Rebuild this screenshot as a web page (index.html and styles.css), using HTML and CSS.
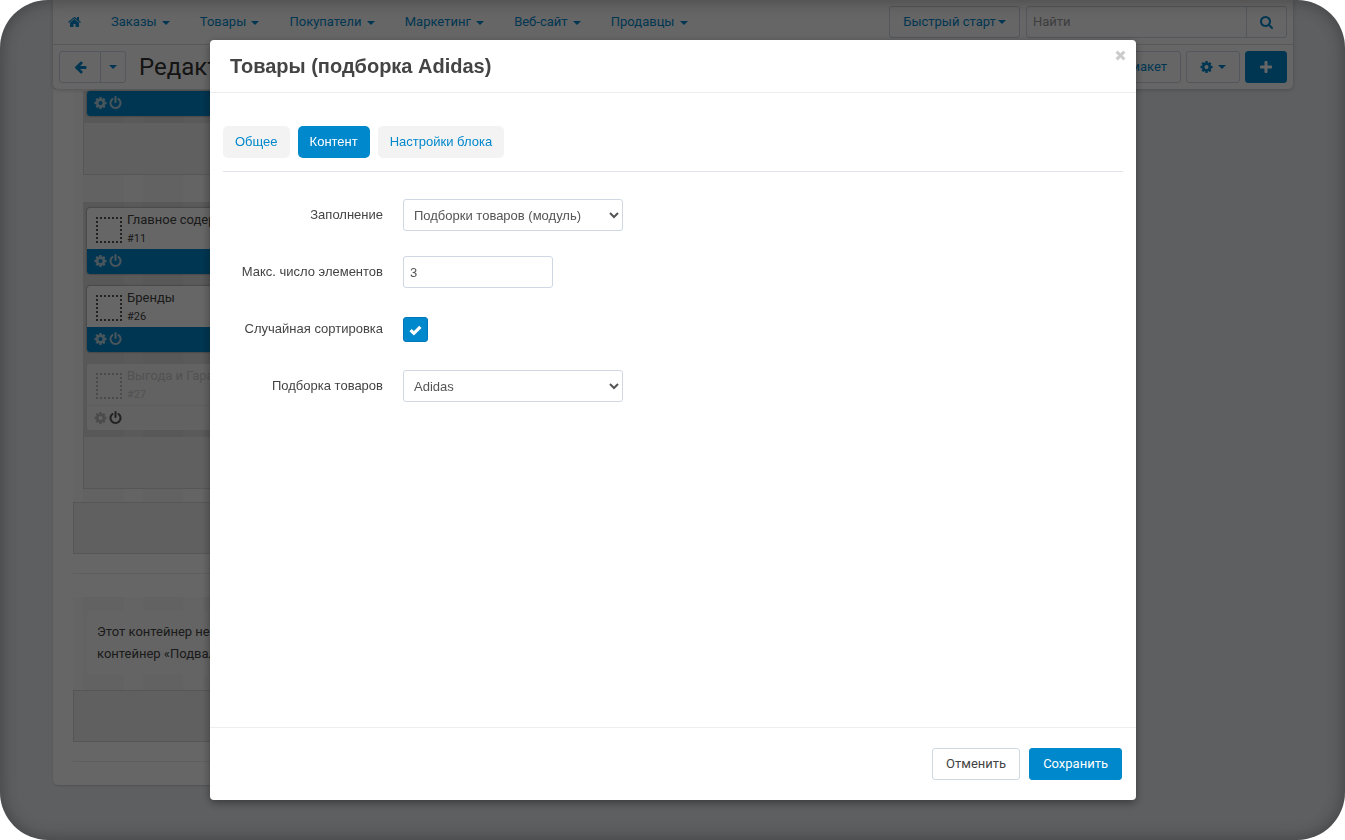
FILE: index.html
```html
<!DOCTYPE html>
<html lang="ru">
<head>
    <meta charset="UTF-8">
    <meta name="viewport" content="width=device-width, initial-scale=1.0">
    <title>Редактирование макета</title>
    <link rel="stylesheet" href="styles.css">
</head>
<body>

    <!-- Shared icons -->
    <svg class="sprite" aria-hidden="true">
        <symbol id="i-home" viewBox="0 0 1664 1792"><path d="M1408 992v480q0 26-19 45t-45 19H960v-384H704v384H320q-26 0-45-19t-19-45V992q0-1 .5-3t.5-3l575-474 575 474q1 2 1 6zm223-69l-62 74q-8 9-21 11h-3q-13 0-21-7L832 424l-692 577q-12 8-24 7-13-2-21-11l-62-74q-8-10-7-23.500t11-21.500l719-599q32-26 76-26t76 26l244 204V288q0-14 9-23t23-9h192q14 0 23 9t9 23v408l219 182q10 8 11 21.500t-7 23.500z"/></symbol>
        <symbol id="i-gear" viewBox="0 0 1536 1792"><path d="M1024 896q0-106-75-181t-181-75-181 75-75 181 75 181 181 75 181-75 75-181zm512-109v222q0 12-8 23t-20 13l-185 28q-19 54-39 91 35 50 107 138 10 12 10 25t-9 23q-27 37-99 108t-94 71q-12 0-26-9l-138-108q-44 23-91 38-16 136-29 186-7 28-36 28H657q-14 0-24.500-8.500T621 1634l-28-184q-49-16-90-37l-141 107q-10 9-25 9-14 0-25-11-126-114-165-168-7-10-7-23 0-12 8-23 15-21 51-66.500t54-70.500q-27-50-41-99L29 1040q-13-2-21-12.500T0 1004V782q0-12 8-23t19-13l186-28q14-46 39-92-40-57-107-138-10-12-10-24 0-10 9-23 26-36 98.500-107.500T337 262q13 0 26 10l138 107q44-23 91-38 16-136 29-186 7-28 36-28h222q14 0 24.500 8.500T915 157l28 184q49 16 90 37l142-107q9-9 24-9 13 0 25 10 129 119 165 170 7 8 7 22 0 12-8 23-15 21-51 66.500t-54 70.500q26 50 41 98l183 28q13 2 21 12.500t8 23.500z"/></symbol>
        <symbol id="i-power" viewBox="0 0 1536 1792"><path d="M1536 896q0 156-61 298t-164 245-245 164-298 61-298-61-245-164-164-245T0 896q0-182 80.500-343T307 283q43-32 95.500-25t83.500 50q32 42 24.500 94.500T461 487q-98 74-151.500 181T256 896q0 104 40.500 198.500T406 1258t163.500 109.500T768 1408t198.500-40.500T1130 1258t109.500-163.500T1280 896q0-121-53.500-228T1075 487q-42-32-49.500-84.500T1050 308q31-43 84-50t95 25q146 109 226.500 270t80.500 343zM896 128v640q0 52-38 90t-90 38-90-38-38-90V128q0-52 38-90t90-38 90 38 38 90z"/></symbol>
        <symbol id="i-search" viewBox="0 0 1664 1792"><path d="M1152 832q0-185-131.500-316.500T704 384 387.500 515.500 256 832t131.500 316.500T704 1280t316.500-131.500T1152 832zm512 832q0 52-38 90t-90 38q-54 0-90-38l-343-342q-179 124-399 124-143 0-273.500-55.500t-225-150-150-225T0 832t55.500-273.500 150-225 225-150T704 128t273.500 55.500 225 150 150 225T1408 832q0 220-124 399l343 343q37 37 37 90z"/></symbol>
        <symbol id="i-back" viewBox="0 0 1536 1792"><path d="M1536 896v128q0 53-32.500 90.500T1419 1152H715l293 294q38 36 38 90t-38 90l-75 76q-37 37-90 37-52 0-91-37L101 1050q-37-37-37-90 0-52 37-91l651-650q38-38 91-38 52 0 90 38l75 74q38 38 38 91t-38 91L715 768h704q52 0 84.500 37.500T1536 896z"/></symbol>
        <symbol id="i-plus" viewBox="0 0 12 12"><path d="M4.500 1Q4.500 0 5.500 0h1Q7.500 0 7.500 1v3.500H11q1 0 1 1v1q0 1-1 1H7.500V11q0 1-1 1h-1q-1 0-1-1V7.500H1q-1 0-1-1v-1q0-1 1-1h3.500z"/></symbol>
        <symbol id="i-close" viewBox="0 0 12 12"><path d="M3 3l6 6m0-6l-6 6" fill="none" stroke="currentColor" stroke-width="3.400" stroke-linecap="square"/></symbol>
    </svg>

    <div class="page">
        <header class="header">
            <nav class="navbar">
                <a href="#" class="home" aria-label="Главная"><svg class="icon"><use href="#i-home"/></svg></a>
                <a href="#">Заказы <i class="caret"></i></a>
                <a href="#">Товары <i class="caret"></i></a>
                <a href="#">Покупатели <i class="caret"></i></a>
                <a href="#">Маркетинг <i class="caret"></i></a>
                <a href="#">Веб-сайт <i class="caret"></i></a>
                <a href="#">Продавцы <i class="caret"></i></a>
                <button class="btn quick-start">Быстрый старт <i class="caret"></i></button>
                <form class="search">
                    <input type="text" placeholder="Найти" aria-label="Найти">
                    <button type="button" aria-label="Поиск"><svg class="icon"><use href="#i-search"/></svg></button>
                </form>
            </nav>
            <div class="actions">
                <div class="btn-group">
                    <button class="btn back" aria-label="Назад"><svg class="icon"><use href="#i-back"/></svg></button>
                    <button class="btn back-menu" aria-label="История"><i class="caret"></i></button>
                </div>
                <h1>Редактирование</h1>
                <button class="btn export">Экспортировать макет</button>
                <button class="btn tools" aria-label="Инструменты"><svg class="icon"><use href="#i-gear"/></svg> <i class="caret"></i></button>
                <button class="btn add" aria-label="Добавить"><svg class="icon"><use href="#i-plus"/></svg></button>
            </div>
        </header>

        <main class="layout">
            <section class="container">
                <div class="grid">
                    <div class="block first">
                        <div class="block-bar">
                            <svg class="icon"><use href="#i-gear"/></svg>
                            <svg class="icon"><use href="#i-power"/></svg>
                        </div>
                    </div>
                </div>
                <div class="grid-bar"></div>
                <div class="grid second">
                    <div class="block">
                        <div class="block-body">
                            <span class="block-icon"></span>
                            <div>Главное содержимое<small>#11</small></div>
                        </div>
                        <div class="block-bar">
                            <svg class="icon"><use href="#i-gear"/></svg>
                            <svg class="icon"><use href="#i-power"/></svg>
                        </div>
                    </div>
                    <div class="block">
                        <div class="block-body">
                            <span class="block-icon"></span>
                            <div>Бренды<small>#26</small></div>
                        </div>
                        <div class="block-bar">
                            <svg class="icon"><use href="#i-gear"/></svg>
                            <svg class="icon"><use href="#i-power"/></svg>
                        </div>
                    </div>
                    <div class="block disabled">
                        <div class="block-body">
                            <span class="block-icon"></span>
                            <div>Выгода и Гарантии<small>#27</small></div>
                        </div>
                        <div class="block-bar">
                            <svg class="icon"><use href="#i-gear"/></svg>
                            <svg class="icon power"><use href="#i-power"/></svg>
                        </div>
                    </div>
                </div>
                <div class="grid-bar"></div>
                <div class="container-bar"></div>
            </section>
            <hr>
            <section class="container footer-container">
                <p class="note">Этот контейнер не настроен.<br>контейнер «Подвал» по умолчанию</p>
                <div class="container-bar"></div>
            </section>
            <hr>
        </main>
    </div>

    <!-- Block settings dialog -->
    <div class="overlay">
        <div class="modal" role="dialog" aria-labelledby="modal-title">
            <div class="modal-header">
                <h2 id="modal-title">Товары (подборка Adidas)</h2>
                <button class="close-btn" aria-label="Закрыть"><svg class="icon"><use href="#i-close"/></svg></button>
            </div>
            <form class="modal-body" id="block-form">
                <div class="tabs">
                    <a href="#">Общее</a>
                    <a href="#" class="active">Контент</a>
                    <a href="#">Настройки блока</a>
                </div>
                <div class="field">
                    <label for="filling">Заполнение</label>
                    <select id="filling"><option>Подборки товаров (модуль)</option></select>
                </div>
                <div class="field">
                    <label for="limit">Макс. число элементов</label>
                    <input type="text" id="limit" value="3">
                </div>
                <div class="field">
                    <label for="random">Случайная сортировка</label>
                    <input type="checkbox" id="random" checked>
                </div>
                <div class="field">
                    <label for="selection">Подборка товаров</label>
                    <select id="selection"><option>Adidas</option></select>
                </div>
            </form>
            <div class="modal-footer">
                <button class="btn cancel">Отменить</button>
                <button class="btn save" form="block-form" type="button">Сохранить</button>
            </div>
        </div>
    </div>

</body>
</html>
```

FILE: styles.css
```css
* {
    box-sizing: border-box;
}

body {
    margin: 0;
    background-color: #fff;
    font-family: Roboto, "Liberation Sans", sans-serif;
    font-size: 13px;
    line-height: 20px;
    color: #444;
}

a {
    color: #08c;
    text-decoration: none;
}

button, input, select {
    font: inherit;
    color: inherit;
}

.sprite {
    display: none;
}

.icon {
    display: block;
    flex: none;
    width: 13px;
    height: 14px;
    fill: currentColor;
}

.caret {
    display: inline-block;
    border: 4px solid transparent;
    border-top-color: currentColor;
    border-bottom: 0;
    vertical-align: middle;
}

.page {
    height: 100vh;
    padding: 0 52px 0 53px;
    overflow: hidden;
    border-radius: 48px;
    background-color: #ebeef2;
}

.header {
    position: relative;
    background-color: #fff;
    border-radius: 0 0 5px 5px;
    box-shadow: 0 1px 4px rgba(0, 0, 0, 0.2);
}

.navbar {
    display: flex;
    align-items: center;
    height: 45px;
    padding: 0 6px 0 15px;
    border-bottom: 1px solid #d8dbe0;
}

.navbar a {
    margin-right: 30px;
}

.navbar .caret {
    margin-left: 2px;
}

.btn {
    display: flex;
    align-items: center;
    justify-content: center;
    height: 32px;
    padding: 0 13px;
    background-color: #fff;
    border: 1px solid #cfd8e2;
    border-radius: 3px;
    color: #08c;
    white-space: nowrap;
    cursor: pointer;
}

.quick-start {
    width: 131px;
    margin-left: auto;
}

.search {
    display: flex;
    width: 261px;
    height: 32px;
    margin-left: 6px;
    border: 1px solid #cfd8e2;
    border-radius: 3px;
}

.search input {
    flex: 1;
    min-width: 0;
    padding: 0 6px;
    border: 0;
    background: none;
}

.search input::placeholder {
    color: #999;
}

.search button {
    display: flex;
    align-items: center;
    justify-content: center;
    width: 40px;
    padding: 0;
    border: 0;
    border-left: 1px solid #cfd8e2;
    background: none;
    color: #08c;
}

.actions {
    display: flex;
    align-items: center;
    gap: 5px;
    height: 44px;
    padding: 0 6px;
}

.btn-group {
    display: flex;
}

.back {
    width: 42px;
    border-radius: 3px 0 0 3px;
}

.back-menu {
    width: 26px;
    margin-left: -1px;
    padding: 0;
    border-radius: 0 3px 3px 0;
}

.actions h1 {
    width: 80px;
    margin: 0 auto 0 8px;
    overflow: hidden;
    font-size: 24px;
    font-weight: 400;
    line-height: 32px;
    color: #333;
}

.tools {
    width: 54px;
    gap: 5px;
}

.add {
    width: 42px;
    background-color: #08c;
    border-color: #08c;
    color: #fff;
}

.add .icon {
    width: 12px;
    height: 12px;
}

.layout {
    width: 70%;
    padding: 2px 20px 23px;
    background-color: #fff;
    border-radius: 0 0 5px 5px;
    box-shadow: 0 1px 2px rgba(0, 0, 0, 0.15);
}

.layout hr {
    height: 1px;
    margin: 19px 0 23px;
    border: 0;
    background-color: #ececec;
}

.layout hr:last-child {
    margin-bottom: 0;
}

.container {
    background: repeating-linear-gradient(90deg, #fafafa 0 10px, #f5f5f5 10px 51px, #fafafa 51px 70px, #f5f5f5 70px 110px, #fafafa 110px 120px);
}

.grid {
    margin-left: 10px;
    padding: 0 4px 7px;
    background-color: rgba(0, 0, 0, 0.1);
}

.grid.second {
    margin-top: 27px;
    padding-top: 6px;
}

.block {
    margin-bottom: 12px;
    background-color: #fff;
    border-radius: 3px;
    box-shadow: 0 0 2px rgba(0, 0, 0, 0.6);
    overflow: hidden;
}

.block:last-child {
    margin-bottom: 0;
}

.block-body {
    display: flex;
    gap: 5px;
    height: 41px;
    padding: 3px 9px 0;
    line-height: 18px;
}

.block-body small {
    display: block;
    font-size: 11px;
    line-height: 20px;
}

.block-icon {
    width: 26px;
    height: 26px;
    margin-top: 6px;
    border: 2px dotted #555;
}

.block-bar {
    display: flex;
    align-items: center;
    gap: 2px;
    height: 25px;
    padding: 0 7px 1px;
    background-color: #08c;
    color: #b4d4e4;
}

.block.disabled {
    background-color: #f5f5f5;
    box-shadow: none;
    color: #ccc;
}

.disabled .block-icon {
    border-color: #bbb;
}

.disabled .block-bar {
    background: none;
    border-top: 1px solid #e9e9e9;
    color: #bbb;
}

.disabled .power {
    color: #555;
}

.grid-bar {
    height: 52px;
    margin-left: 10px;
    background-color: #f0f0f0;
    border: 1px solid #d8d8d8;
    border-top: 0;
}

.container-bar {
    height: 52px;
    margin-top: 13px;
    background-color: #efefef;
    border: 1px solid #d8d8d8;
}

.footer-container {
    padding-top: 14px;
}

.footer-container .container-bar {
    margin-top: 15px;
}

.note {
    margin: 0 14px;
    padding: 10px;
    background-color: #fafafa;
    line-height: 22px;
}

/* Modal styling */
.overlay {
    position: fixed;
    top: 0;
    left: 0;
    width: 100%;
    height: 100%;
    padding: 40px 209px 40px 210px;
    background-color: rgba(0, 0, 0, 0.6);
    border-radius: 48px;
    box-shadow: inset 0 0 20px rgba(0, 0, 0, 0.35);
}

.modal {
    display: flex;
    flex-direction: column;
    height: 100%;
    background-color: #fff;
    border-radius: 4px;
    box-shadow: 0 3px 8px rgba(0, 0, 0, 0.4);
    font-family: "Liberation Sans", Arial, sans-serif;
}

.modal-header {
    display: flex;
    align-items: flex-start;
    justify-content: space-between;
    height: 53px;
    padding: 10px 10px 0 20px;
    border-bottom: 1px solid #eee;
}

.modal-header h2 {
    margin: 0;
    font-size: 20px;
    font-weight: 700;
    line-height: 32px;
}

.close-btn {
    padding: 0;
    border: 0;
    background: none;
    color: #ccc;
    cursor: pointer;
}

.close-btn .icon {
    width: 11px;
    height: 11px;
}

.modal-body {
    flex: 1;
    padding: 33px 13px 0;
}

.tabs {
    display: flex;
    gap: 8px;
    padding-bottom: 13px;
    margin-bottom: 27px;
    border-bottom: 1px solid #e3e3ea;
}

.tabs a {
    padding: 6px 12px;
    background-color: #f3f3f3;
    border-radius: 5px;
}

.tabs .active {
    background-color: #08c;
    color: #fff;
}

.field {
    display: flex;
    align-items: center;
    gap: 20px;
    height: 32px;
    margin-bottom: 25px;
}

.field label {
    width: 160px;
    text-align: right;
}

.field select, .field input {
    height: 32px;
    margin: 0;
    padding: 0 6px;
    background-color: #fff;
    border: 1px solid #cfd8e2;
    border-radius: 3px;
    color: #555;
}

.field select {
    width: 220px;
}

.field input {
    width: 150px;
}

.field input[type="checkbox"] {
    appearance: none;
    width: 25px;
    height: 25px;
    border-color: #07b;
    background: #08c url("data:image/svg+xml,%3Csvg xmlns='http://www.w3.org/2000/svg' viewBox='0 0 12 12'%3E%3Cpath d='M1.500 6.500l3 3 6-6' fill='none' stroke='white' stroke-width='3'/%3E%3C/svg%3E") center / 13px no-repeat;
}

.modal-footer {
    display: flex;
    justify-content: flex-end;
    gap: 9px;
    height: 73px;
    padding: 20px 14px;
    border-top: 1px solid #eee;
    font-family: Roboto, sans-serif;
}

.cancel {
    color: #444;
}

.save {
    background-color: #08c;
    border-color: #08c;
    color: #fff;
}
```
